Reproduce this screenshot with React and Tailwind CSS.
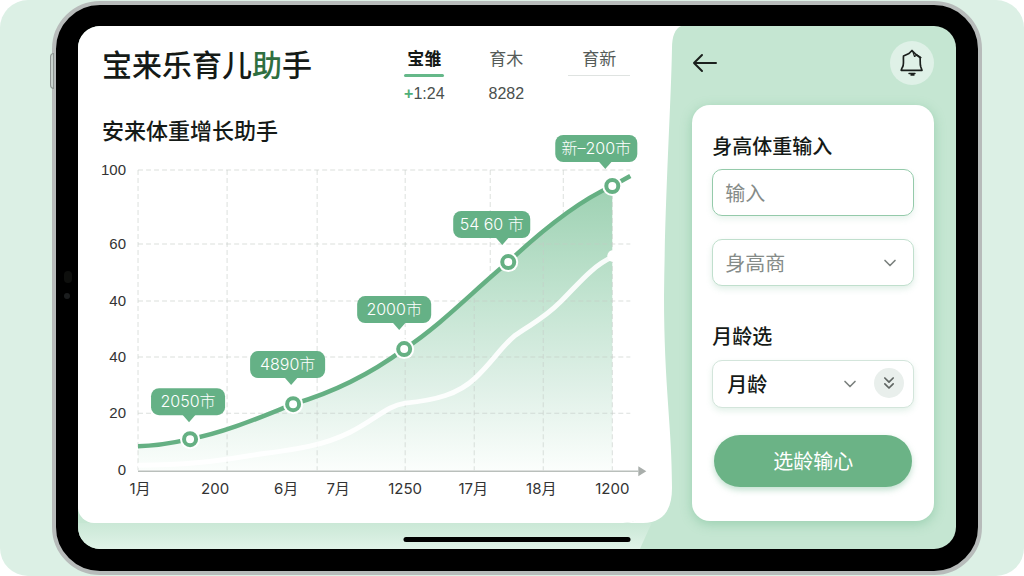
import { useState } from 'react'
import { ChevronDown, ChevronsDown } from 'lucide-react'

const tabs = [
  { id: 'a', label: '宝雏', value: '+1:24', width: 'w-10' },
  { id: 'b', label: '育木', value: '8282', width: 'w-[68px]' },
  { id: 'c', label: '育新', value: '', width: 'w-[62px]' },
]

const yTicks = [
  { y: 12, label: '100' },
  { y: 86, label: '60' },
  { y: 143, label: '40' },
  { y: 199, label: '40' },
  { y: 255, label: '20' },
  { y: 312, label: '0' },
]

const xTicks = [
  { x: 44, label: '1月' },
  { x: 119, label: '200' },
  { x: 190, label: '6月' },
  { x: 242, label: '7月' },
  { x: 309, label: '1250' },
  { x: 377, label: '17月' },
  { x: 445, label: '18月' },
  { x: 516, label: '1200' },
]

const vLines = [
  [42, 12, 312],
  [131, 12, 312],
  [221, 12, 312],
  [309, 12, 312],
  [394, 12, 120],
  [467, 12, 60],
  [378, 140, 312],
  [447, 76, 312],
  [516, 28, 312],
]

const points = [
  { x: 94, y: 281, left: 55, top: 230, w: 74, tip: 93, label: '2050市' },
  { x: 197, y: 246, left: 154, top: 193, w: 75, tip: 195, label: '4890市' },
  { x: 308, y: 191, left: 261, top: 138, w: 74, tip: 303, label: '2000市' },
  { x: 412, y: 104, left: 357, top: 53, w: 77, tip: 406, label: '54 60 市' },
  { x: 516, y: 28, left: 459, top: -23, w: 82, tip: 509, label: '新–200市' },
]

const curve = 'M42 288 C60 288 76 285 94 281 C130 274 162 260 197 246 C238 234 274 216 308 191 C346 166 378 132 412 104 C444 74 480 44 516 28'

function GrowthChart(){
  return (
    <svg viewBox="0 0 562 344" className="block w-full overflow-visible" role="img" aria-label="体重增长曲线">
      <defs>
        <linearGradient id="area" x1="0" y1="28" x2="0" y2="312" gradientUnits="userSpaceOnUse">
          <stop offset="0" stopColor="#9dd1b2" />
          <stop offset="0.4" stopColor="#c3e4d1" />
          <stop offset="0.7" stopColor="#dff0e7" />
          <stop offset="1" stopColor="#fbfefc" />
        </linearGradient>
      </defs>
      <path d={`${curve} V312 H42 Z`} fill="url(#area)" />
      <g stroke="#c4ccc7" strokeOpacity="0.6" strokeDasharray="5 3">
        {yTicks.slice(0, 5).map(t => <line key={t.y} x1="42" x2="534" y1={t.y} y2={t.y} />)}
        {vLines.map(([x, y1, y2]) => <line key={x} x1={x} x2={x} y1={y1} y2={y2} />)}
      </g>
      <line x1="42" x2="542" y1="313" y2="313" stroke="#b9bfbb" strokeWidth="1.5" />
      <path d="M542 308 L550 313 L542 318 Z" fill="#a9aeab" />

      <path
        d="M42 307 C90 307 120 303 150 298 C190 292 222 290 254 274 C280 261 290 248 309 245 C340 242 362 236 379 220 C396 204 404 190 418 178 C434 166 446 162 464 144 C482 126 496 108 516 99"
        fill="none" stroke="#ffffff" strokeOpacity="0.9" strokeWidth="5"
      />
      <circle cx="517" cy="98" r="6" fill="#ffffff" />
      <path d={`${curve} L534 18`} fill="none" stroke="#65b083" strokeWidth="4.5" />

      {points.map(p => (
        <g key={p.label}>
          <circle cx={p.x} cy={p.y} r="10" fill="#ffffff" />
          <circle cx={p.x} cy={p.y} r="6" fill="#ffffff" stroke="#65b083" strokeWidth="4" />
          <rect x={p.left} y={p.top} width={p.w} height="27" rx="8" fill="#65b186" />
          <path d={`M${p.tip - 7} ${p.top + 26} h14 l-7 8 Z`} fill="#65b186" />
          <text x={p.left + p.w / 2} y={p.top + 19} textAnchor="middle" fill="#ffffff" className="font-['Inter','Noto_Sans_CJK_SC',sans-serif] text-[16px] font-light">{p.label}</text>
        </g>
      ))}

      {yTicks.map(t => (
        <text key={t.y} x="30" y={t.y + 5} textAnchor="end" fill="#333333" className="font-['Liberation_Sans',sans-serif] text-[15px]">{t.label}</text>
      ))}
      {xTicks.map(t => (
        <text key={t.x} x={t.x} y="336" textAnchor="middle" fill="#333333" className="font-['Inter','Noto_Sans_CJK_SC',sans-serif] text-[15px]">{t.label}</text>
      ))}
    </svg>
  )
}

function BellIcon(){
  return (
    <svg viewBox="0 -2 24 28" className="h-7 w-6" fill="none" stroke="#1b201d" strokeWidth="1.7" strokeLinejoin="round" strokeLinecap="round">
      <path d="M12 -0.5 L9 2.5 L3.5 5 C3 10 4.5 14 2 17 L1.2 19.3 H22 L20.8 16 C19.6 12 20.6 9.5 20 6.5 L16 3.5 Z" />
      <path d="M13 1 L14.5 5.5 L17 4 L21 6.5" strokeWidth="1.2" />
      <path d="M9 22.5 H15 M11 24 H14" strokeWidth="1.4" />
    </svg>
  )
}

export default function App(){
  const [tab, setTab] = useState('a')
  const [height, setHeight] = useState('')

  return (
    <div className="min-h-screen bg-white font-['Noto_Sans_CJK_SC',sans-serif] text-[#151a17]">
      <main className="flex min-h-screen rounded-[28px] bg-[#dcf0e5] pt-px pr-[42px] pb-px pl-[52px]">
        {/* tablet body */}
        <div className="relative flex flex-1 rounded-[48px] border-4 border-[#b7bbba] bg-black px-[22px] pt-[21px] pb-[22px]">
          <span className="absolute top-12 -left-1.5 h-9 w-1 rounded-l-sm border border-[#8d9491] bg-[#c9d3ce]" />
          <span className="absolute top-[266px] left-2 h-3 w-2 rounded-full bg-[#0e0f0d]" />
          <span className="absolute top-[288px] left-2 size-1.5 rounded-full bg-[#1b1d1e]" />

          <div className="relative flex flex-1 overflow-hidden rounded-[22px] bg-[#c5e6d2]">
            <div className="flex w-2/3 flex-col">
              <section className="relative flex-1 rounded-br-[40px] rounded-bl-[16px] bg-white pr-[5px] pl-[18px]">
                {/* wavy right edge of the white sheet */}
                <svg viewBox="0 0 60 497" preserveAspectRatio="none" className="pointer-events-none absolute top-0 left-full -ml-10 h-full w-[60px]" fill="#ffffff" aria-hidden="true">
                  <path d="M30 0 H58 C52 3 49 10 49 22 C48 80 42 170 41 270 C41 360 49 400 49 462 C49 484 40 497 20 497 H0 C20 497 30 480 30 460 Z" />
                </svg>
                <div className="relative flex items-start justify-between pt-[18px] pr-7 pl-1.5">
                  <h1 className="text-[30px] leading-[38px] font-medium">宝来乐育儿<span className="text-[#2f6f40]">助</span>手</h1>
                  <div className="flex gap-7" role="tablist">
                    {tabs.map(t => (
                      <button key={t.id} role="tab" aria-selected={tab === t.id} onClick={() => setTab(t.id)} className={`flex flex-col items-center ${t.width}`}>
                        <span className={`text-[17px] leading-[27px] ${tab === t.id ? 'font-bold' : 'text-[#555b58]'}`}>{t.label}</span>
                        <span className={`w-full ${tab === t.id ? 'mt-[3px] h-[3px] rounded-full bg-[#65b889]' : t.value ? 'mt-[3px] h-[3px]' : 'mt-1 h-px bg-[#dfe3e1]'}`} />
                        <span className="mt-1.5 font-['Liberation_Sans',sans-serif] text-[16px] leading-[22px] text-[#4a504d]">
                          {t.value.startsWith('+') ? <><span className="font-bold text-[#4fae78]">+</span>{t.value.slice(1)}</> : t.value}
                        </span>
                      </button>
                    ))}
                  </div>
                </div>
                <h2 className="relative mt-2 mb-[13px] pl-1.5 text-[22px] leading-8 font-medium">安来体重增长助手</h2>
                <GrowthChart />
              </section>
              <div className="h-[26px] bg-linear-to-b from-[#cae8d6] to-[#e0f3e8] [clip-path:polygon(0_0,98%_0,96%_100%,0_100%)]" />
            </div>

            <aside className="flex flex-1 flex-col pr-[22px] pl-[29px]">
              <header className="flex items-center justify-between pt-[15px]">
                <button aria-label="返回">
                  <svg viewBox="0 0 26 20" className="h-5 w-[26px]" fill="none" stroke="#1b201d" strokeWidth="2" strokeLinecap="round" strokeLinejoin="round">
                    <path d="M24 10 H2 M10 2 L2 10 L10 18" />
                  </svg>
                </button>
                <button aria-label="通知" className="flex size-11 items-center justify-center rounded-full bg-[#dff1e7]"><BellIcon /></button>
              </header>
              <form onSubmit={e => e.preventDefault()} className="mt-5 flex flex-col rounded-[18px] bg-white px-5 pt-[26px] pb-[34px] shadow-[0_3px_12px_rgba(90,175,125,0.4)]">
                <label htmlFor="height" className="text-[20px] leading-[30px] font-medium">身高体重输入</label>
                <input id="height" value={height} onChange={e => setHeight(e.target.value)} placeholder="输入" className="mt-2 h-[47px] w-full rounded-[10px] border border-[#94caaa] px-3 text-[20px] shadow-[0_3px_6px_rgba(101,177,134,0.15)] placeholder:text-[#858b88]" />
                <div className="relative mt-[23px]">
                  <select aria-label="身高商" className="h-[47px] w-full appearance-none rounded-[10px] border border-[#c0dfcd] bg-white px-3 text-[20px] text-[#858b88] shadow-[0_3px_6px_rgba(101,177,134,0.2)]">
                    <option>身高商</option>
                  </select>
                  <ChevronDown className="pointer-events-none absolute top-3.5 right-3.5 size-5 text-[#7b817e]" />
                </div>
                <label htmlFor="age" className="mt-[35px] text-[20px] leading-[30px] font-medium">月龄选</label>
                <div className="relative mt-[9px]">
                  <select id="age" className="h-12 w-full appearance-none rounded-[10px] border border-[#d3e5db] bg-white px-3.5 text-[20px] font-medium shadow-[0_3px_6px_rgba(101,177,134,0.18)]">
                    <option>月龄</option>
                  </select>
                  <ChevronDown className="pointer-events-none absolute top-3.5 right-[54px] size-5 text-[#7b817e]" />
                  <button type="button" aria-label="更多" className="absolute top-2 right-2.5 flex size-[30px] items-center justify-center rounded-full bg-[#e9efec]">
                    <ChevronsDown className="size-5 text-[#5f6562]" />
                  </button>
                </div>
                <button className="mx-0.5 mt-[27px] h-[52px] rounded-full bg-[#6bb386] text-[20px] text-white shadow-[0_3px_6px_rgba(101,177,134,0.4)]">选龄输心</button>
              </form>
            </aside>

            <span className="absolute bottom-[7px] left-1/2 h-[5px] w-[227px] -translate-x-1/2 rounded-full bg-black" />
          </div>
        </div>
      </main>
    </div>
  )
}
